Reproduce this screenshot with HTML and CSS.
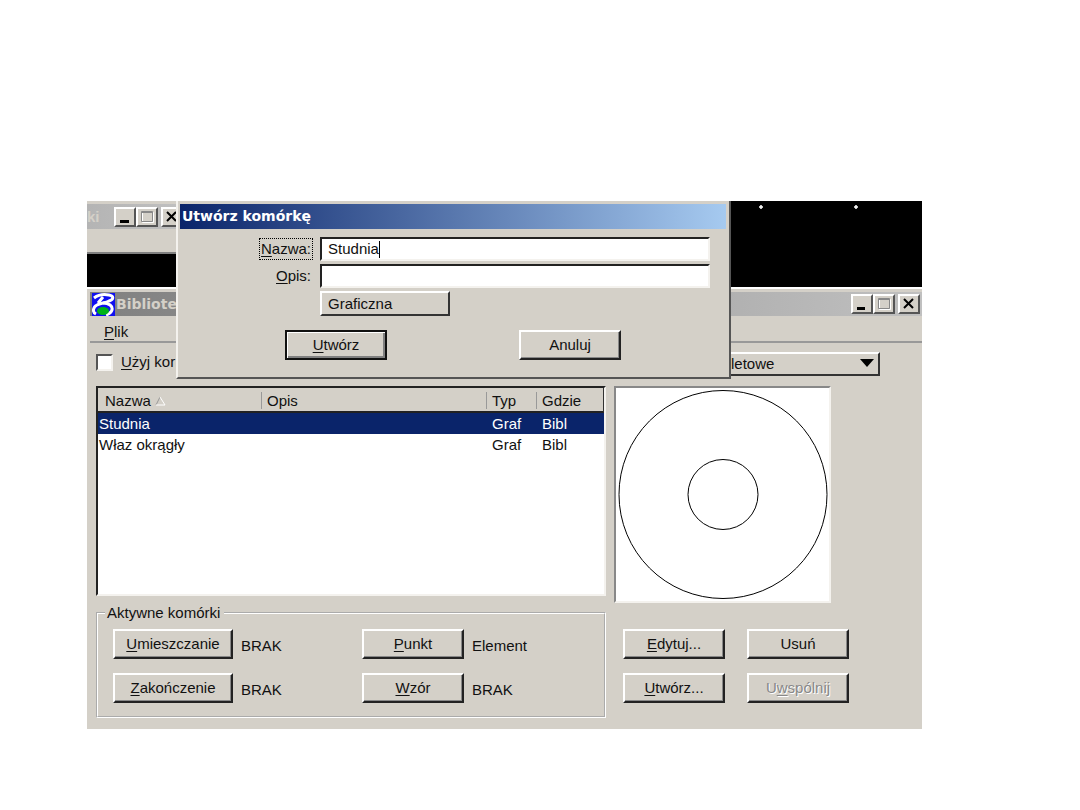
FILE: index.html
```html
<!DOCTYPE html>
<html lang="pl">
<head>
<meta charset="utf-8">
<title>Utwórz komórkę</title>
<link rel="stylesheet" href="styles.css">
</head>
<body>
<main class="screen">
  <div class="desktop">
    <section class="rear">
      <div class="rear-title">
        <span class="rear-name">ki</span>
        <button class="cap" type="button" aria-label="Minimalizuj"><svg width="18" height="16" viewBox="0 0 18 16"><path d="M4 11h9v3H4z"/></svg></button>
        <button class="cap" type="button" aria-label="Maksymalizuj"><svg width="18" height="16" viewBox="0 0 18 16"><path d="M4.500 3.500h11v10h-11z" fill="none" stroke="#fff"/><path d="M3.500 2.500h11v10h-11zM3.500 3.500h11" fill="none" stroke="#888"/></svg></button>
        <button class="cap cap-close" type="button" aria-label="Zamknij"><svg width="18" height="16" viewBox="0 0 18 16"><path d="M4 3l9 9M13 3l-9 9" stroke="#000" stroke-width="2"/></svg></button>
      </div>
    </section>
    <svg class="points" width="100" height="8" viewBox="0 0 100 8"><path d="M0 3h4M2 1v4M95 3h4M97 1v4" stroke="#fff" stroke-width="1.500"/></svg>
  </div>

  <section class="library">
    <header class="lib-title">
      <svg class="logo" width="23" height="23" viewBox="0 0 23 23">
        <path d="M0 0h23v23H0z" fill="#1010f0"/>
        <path d="M2 5C6 2 12 1 17 2C22 3 22 6 17 8C13 10 8 10 5 12C1 14 0 19 4 21" fill="none" stroke="#fff" stroke-width="3"/>
        <path d="M11 4L6 10M11 10C17 10 21 13 20 17C19 20 17 21 14 22" fill="none" stroke="#fff" stroke-width="3"/>
        <ellipse cx="11" cy="18" rx="6" ry="4" fill="#00b418"/>
      </svg>
      <span class="lib-name">Bibliote</span>
      <button class="cap" type="button" aria-label="Minimalizuj"><svg width="18" height="16" viewBox="0 0 18 16"><path d="M4 11h8v3H4z"/></svg></button>
      <button class="cap" type="button" aria-label="Maksymalizuj"><svg width="18" height="16" viewBox="0 0 18 16"><path d="M4.500 3.500h11v10h-11z" fill="none" stroke="#fff"/><path d="M3.500 2.500h11v10h-11zM3.500 3.500h11" fill="none" stroke="#888"/></svg></button>
      <button class="cap cap-close" type="button" aria-label="Zamknij"><svg width="18" height="16" viewBox="0 0 18 16"><path d="M4 3l9 9M13 3l-9 9" stroke="#000" stroke-width="2"/></svg></button>
    </header>
    <nav class="menu"><button type="button"><u>P</u>lik</button></nav>
    <div class="tools">
      <label class="check"><input type="checkbox"><span><u>U</u>żyj kor</span></label>
      <div class="view">
        <select aria-label="Widok"><option>letowe</option></select>
        <svg class="arrow" width="14" height="8" viewBox="0 0 14 8"><path d="M0 0h14L7 8z"/></svg>
      </div>
    </div>

    <div class="content">
      <div class="list">
        <table>
          <colgroup><col class="c-name"><col><col class="c-type"><col class="c-where"></colgroup>
          <thead>
            <tr>
              <th>Nazwa <svg width="11" height="10" viewBox="0 0 11 10"><path d="M1 9L5 1" stroke="#999"/><path d="M5 1l5 8H1" fill="none" stroke="#fff"/></svg></th>
              <th>Opis</th><th>Typ</th><th>Gdzie</th>
            </tr>
          </thead>
          <tbody>
            <tr class="selected"><td>Studnia</td><td></td><td>Graf</td><td>Bibl</td></tr>
            <tr><td>Właz okrągły</td><td></td><td>Graf</td><td>Bibl</td></tr>
          </tbody>
        </table>
      </div>

      <div class="preview">
        <svg viewBox="0 0 213 213" fill="none" stroke="#000">
          <circle cx="107" cy="106.500" r="104"/>
          <circle cx="107" cy="106.500" r="35"/>
        </svg>
      </div>

      <fieldset class="active">
        <legend>Aktywne komórki</legend>
        <div class="cells">
          <button class="btn wide" type="button"><u>U</u>mieszczanie</button><output>BRAK</output>
          <button class="btn" type="button"><u>P</u>unkt</button><output>Element</output>
          <button class="btn wide" type="button"><u>Z</u>akończenie</button><output>BRAK</output>
          <button class="btn" type="button"><u>W</u>zór</button><output>BRAK</output>
        </div>
      </fieldset>

      <div class="actions">
        <button class="btn" type="button"><u>E</u>dytuj...</button>
        <button class="btn" type="button">Usuń</button>
        <button class="btn" type="button"><u>U</u>twórz...</button>
        <button class="btn" type="button" disabled>U<u>w</u>spólnij</button>
      </div>
    </div>
  </section>

  <form class="dialog">
    <h1>Utwórz komórkę</h1>
    <div class="fields">
      <label class="focused" for="name"><u>N</u>azwa:</label>
      <div class="box"><input id="name" type="text" value="Studnia"><i class="caret"></i></div>
      <label for="desc"><u>O</u>pis:</label>
      <div class="box"><input id="desc" type="text"></div>
      <select class="kind" aria-label="Typ komórki"><option>Graficzna</option></select>
    </div>
    <div class="confirm">
      <button class="btn default" type="button"><u>U</u>twórz</button>
      <button class="btn" type="button">Anuluj</button>
    </div>
  </form>
</main>
</body>
</html>
```
FILE: styles.css
```css
* { box-sizing: border-box; }

body {
  margin: 0;
  background: #fff;
  color: #111;
  font: 15px/20px "Liberation Sans", Arial, sans-serif;
}

button, input, select {
  margin: 0;
  padding: 0;
  border: 0;
  border-radius: 0;
  background: none;
  color: inherit;
  font: inherit;
  outline: 0;
}

select { appearance: none; }
u { text-underline-offset: 2px; }

.screen {
  position: relative;
  margin: 201px 158px 81px 87px;
  background: #000;
  overflow: hidden;
}

.desktop {
  display: flex;
  justify-content: space-between;
  height: 86px;
}

.rear {
  width: 96px;
  height: 53px;
  padding-top: 3px;
  background: #d4d0c8;
  border-bottom: 2px solid #808080;
}

.rear-title {
  display: flex;
  align-items: center;
  height: 25px;
  background: linear-gradient(90deg, #b4b4b4, #c0c0c0);
}

.rear-name {
  flex: 0 0 27px;
  color: #d4d0c8;
  font-weight: bold;
}

.points { margin: 3px 63px 0 0; }

.cap {
  display: flex;
  flex: none;
  width: 22px;
  height: 20px;
  border: 2px solid;
  border-color: #fff #555 #555 #fff;
  background: #d4d0c8;
}

.cap-close { margin-left: 3px; }

.library {
  padding: 3px 0 11px 3px;
  background: #d4d0c8;
  border-top: 2px solid #fff;
}

.lib-title {
  display: flex;
  align-items: center;
  height: 24px;
  padding-right: 2px;
  background: linear-gradient(90deg, #808080, #c0c0c0);
}

.logo { flex: none; margin-left: 2px; }

.lib-name {
  flex: 1;
  padding-left: 1px;
  color: #d4d0c8;
  font: bold 14px/20px "DejaVu Sans", sans-serif;
}

.menu {
  height: 27px;
  padding: 6px 14px 0;
  border-bottom: 2px solid #999;
}

.menu button { display: block; height: 20px; }

.tools {
  display: flex;
  justify-content: space-between;
  padding: 9px 42px 0 6px;
}

.check { display: flex; gap: 8px; align-items: center; height: 20px; }

.check input {
  appearance: none;
  width: 17px;
  height: 17px;
  background: #fff;
  border: 2px solid;
  border-color: #555 #f4f2ee #f4f2ee #555;
}

.view { position: relative; width: 149px; }

.view select {
  display: block;
  width: 100%;
  height: 24px;
  border: 2px solid;
  border-color: #fff #333 #333 transparent;
  border-left-width: 0;
  background: #d4d0c8;
}

.arrow { position: absolute; right: 6px; top: 7px; }

.content {
  display: grid;
  grid-template-columns: 1fr 308px;
  column-gap: 8px;
  padding: 10px 0 0 6px;
}

.list {
  height: 210px;
  border: 2px solid;
  border-color: #222 #f4f2ee #f4f2ee #222;
  background: #fff;
}

table {
  width: 100%;
  table-layout: fixed;
  border-collapse: separate;
  border-spacing: 0;
}

.c-name { width: 163px; }
.c-type { width: 50px; }
.c-where { width: 68px; }

thead { background: #d4d0c8; }

th {
  height: 25px;
  padding: 2px 0 0 6px;
  border-bottom: 2px solid #222;
  background: linear-gradient(#999, #999) 0 4px / 1px 17px no-repeat;
  text-align: left;
  font-weight: normal;
}

th:first-child { background: none; padding-left: 7px; }
th:last-child { border-right: 1px solid #333; }

td {
  height: 21px;
  padding: 0 0 0 6px;
}

td:first-child { padding-left: 1px; }

.selected { background: #0a246a; color: #fff; }

.preview {
  width: 217px;
  height: 217px;
  border: 2px solid;
  border-color: #888 #f4f2ee #f4f2ee #888;
  background: #fff;
}

.preview svg { display: block; }

.active {
  min-width: 0;
  height: 115px;
  margin: 0;
  padding: 6px 15px 0;
  border: 2px groove #fff;
}

.active legend { margin-left: -8px; padding: 0 4px 0 2px; }

.cells {
  display: grid;
  grid-template-columns: 120px 1fr 102px 1fr;
  gap: 14px 8px;
  padding-right: 4px;
}

.cells output { padding-top: 7px; }

.btn {
  width: 102px;
  height: 30px;
  border: 2px solid;
  border-color: #fff #222 #222 #fff;
  box-shadow: inset -1px -1px #888;
  background: #d4d0c8;
}

.btn.wide { width: 120px; }
.btn:disabled { color: #888; text-shadow: 1px 1px #fff; }

.btn.default {
  border-color: #111;
  box-shadow: inset 1px 1px #fff, inset -2px -2px #808080;
}

.actions {
  display: grid;
  grid-template-columns: 102px 102px;
  gap: 14px 22px;
  align-content: start;
  padding: 26px 0 0 9px;
}

.dialog {
  position: absolute;
  top: 0;
  left: 89px;
  right: 191px;
  height: 178px;
  padding: 3px 3px 0 2px;
  background: #d4d0c8;
  border: 2px solid;
  border-color: #d4d0c8 #555 #555 #f4f2ee;
  border-top: 0;
}

.dialog h1 {
  margin: 0;
  height: 25px;
  padding: 2px;
  background: linear-gradient(90deg, #0a246a, #a6caf0);
  color: #fff;
  font: bold 14px/20px "DejaVu Sans", sans-serif;
}

.fields {
  display: grid;
  grid-template-columns: auto 1fr;
  gap: 3px 7px;
  padding: 8px 16px 0 79px;
}

.fields label {
  justify-self: end;
  align-self: center;
  padding: 0 1px;
  border: 1px solid transparent;
}

.fields .focused { border: 1px dotted #000; }

.box {
  display: flex;
  position: relative;
  height: 24px;
  border: 2px solid;
  border-color: #222 #f4f2ee #f4f2ee #222;
  background: #fff;
}

.box input { flex: 1; min-width: 0; padding-left: 6px; }

.caret {
  position: absolute;
  left: 57px;
  top: 2px;
  width: 1px;
  height: 17px;
  background: #000;
}

.kind {
  grid-column: 2;
  width: 130px;
  height: 25px;
  padding-left: 6px;
  border: 2px solid;
  border-color: #fff #333 #333 #fff;
}

.confirm {
  display: flex;
  justify-content: space-between;
  padding: 14px 105px 0 105px;
}
```
